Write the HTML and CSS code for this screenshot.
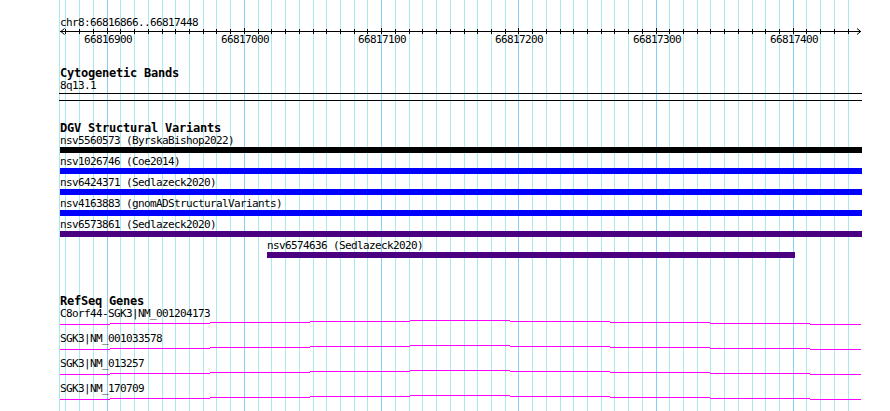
FILE: index.html
```html
<!DOCTYPE html>
<html lang="en">
<head>
<meta charset="utf-8">
<title>chr8:66816866..66817448</title>
<link rel="stylesheet" href="styles.css">
</head>
<body>
<div class="view">
  <svg class="grid" width="890" height="411" viewBox="0 0 890 411" aria-hidden="true">
    <path class="grid-minor" d="M59.5 0V411M65.5 0V411M79.5 0V411M93.5 0V411M120.5 0V411M134.5 0V411M148.5 0V411M162.5 0V411M175.5 0V411M189.5 0V411M203.5 0V411M216.5 0V411M230.5 0V411M258.5 0V411M271.5 0V411M285.5 0V411M299.5 0V411M313.5 0V411M326.5 0V411M340.5 0V411M354.5 0V411M367.5 0V411M395.5 0V411M409.5 0V411M422.5 0V411M436.5 0V411M450.5 0V411M464.5 0V411M477.5 0V411M491.5 0V411M505.5 0V411M532.5 0V411M546.5 0V411M560.5 0V411M573.5 0V411M587.5 0V411M601.5 0V411M614.5 0V411M628.5 0V411M642.5 0V411M669.5 0V411M683.5 0V411M697.5 0V411M710.5 0V411M724.5 0V411M738.5 0V411M752.5 0V411M765.5 0V411M779.5 0V411M806.5 0V411M820.5 0V411M834.5 0V411M848.5 0V411"/>
    <path class="grid-major" d="M107.5 0V411M244.5 0V411M381.5 0V411M518.5 0V411M656.5 0V411M793.5 0V411"/>
  </svg>

  <div class="tracks">
    <section class="ruler">
      <div class="locus">chr8:66816866..66817448</div>
      <svg class="axis" width="802" height="20" viewBox="0 0 802 20">
        <path class="axis-line" d="M0 4.5H801"/>
        <path class="axis-line" d="M5.5 2V7M19.5 2V7M33.5 2V7M60.5 2V7M74.5 2V7M88.5 2V7M102.5 2V7M115.5 2V7M129.5 2V7M143.5 2V7M156.5 2V7M170.5 2V7M198.5 2V7M211.5 2V7M225.5 2V7M239.5 2V7M253.5 2V7M266.5 2V7M280.5 2V7M294.5 2V7M307.5 2V7M335.5 2V7M349.5 2V7M362.5 2V7M376.5 2V7M390.5 2V7M404.5 2V7M417.5 2V7M431.5 2V7M445.5 2V7M472.5 2V7M486.5 2V7M500.5 2V7M513.5 2V7M527.5 2V7M541.5 2V7M554.5 2V7M568.5 2V7M582.5 2V7M609.5 2V7M623.5 2V7M637.5 2V7M650.5 2V7M664.5 2V7M678.5 2V7M692.5 2V7M705.5 2V7M719.5 2V7M746.5 2V7M760.5 2V7M774.5 2V7M788.5 2V7"/>
        <path class="axis-line" d="M47.5 1V7M184.5 1V7M321.5 1V7M458.5 1V7M596.5 1V7M733.5 1V7"/>
        <path class="axis-arrow" d="M4.5 1.5L0.8 4.5L4.5 7.5"/>
        <path class="axis-arrow" d="M797 1.5L800.7 4.5L797 7.5"/>
        <text x="48" y="16">66816900</text>
        <text x="185" y="16">66817000</text>
        <text x="322" y="16">66817100</text>
        <text x="459" y="16">66817200</text>
        <text x="597" y="16">66817300</text>
        <text x="734" y="16">66817400</text>
      </svg>
    </section>

    <section class="track cyto">
      <h2 class="track-title">Cytogenetic Bands</h2>
      <div class="label">8q13.1</div>
      <div class="band"></div>
    </section>

    <section class="track dgv">
      <h2 class="track-title">DGV Structural Variants</h2>
      <div class="sv">
        <div class="label">nsv5560573 (ByrskaBishop2022)</div>
        <div class="bar bar-black"></div>
      </div>
      <div class="sv">
        <div class="label">nsv1026746 (Coe2014)</div>
        <div class="bar bar-blue"></div>
      </div>
      <div class="sv">
        <div class="label">nsv6424371 (Sedlazeck2020)</div>
        <div class="bar bar-blue"></div>
      </div>
      <div class="sv">
        <div class="label">nsv4163883 (gnomADStructuralVariants)</div>
        <div class="bar bar-blue"></div>
      </div>
      <div class="sv">
        <div class="label">nsv6573861 (Sedlazeck2020)</div>
        <div class="bar bar-indigo"></div>
      </div>
      <div class="sv" style="margin-left:207px;width:528px">
        <div class="label">nsv6574636 (Sedlazeck2020)</div>
        <div class="bar bar-indigo"></div>
      </div>
    </section>

    <section class="track refseq">
      <h2 class="track-title">RefSeq Genes</h2>
      <div class="gene">
        <div class="label">C8orf44-SGK3|NM_001204173</div>
        <svg class="intron" width="802" height="13" viewBox="0 0 802 13"><path d="M0 4.5H50M50 3.5H150M150 2.5H250M250 1.5H350M350 0.5H450M450 1.5H550M550 2.5H650M650 3.5H750M750 4.5H801"/></svg>
      </div>
      <div class="gene">
        <div class="label">SGK3|NM_001033578</div>
        <svg class="intron" width="802" height="13" viewBox="0 0 802 13"><path d="M0 4.5H50M50 3.5H150M150 2.5H250M250 1.5H350M350 0.5H450M450 1.5H550M550 2.5H650M650 3.5H750M750 4.5H801"/></svg>
      </div>
      <div class="gene">
        <div class="label">SGK3|NM_013257</div>
        <svg class="intron" width="802" height="13" viewBox="0 0 802 13"><path d="M0 4.5H50M50 3.5H150M150 2.5H250M250 1.5H350M350 0.5H450M450 1.5H550M550 2.5H650M650 3.5H750M750 4.5H801"/></svg>
      </div>
      <div class="gene">
        <div class="label">SGK3|NM_170709</div>
        <svg class="intron" width="802" height="13" viewBox="0 0 802 13"><path d="M0 4.5H50M50 3.5H150M150 2.5H250M250 1.5H350M350 0.5H450M450 1.5H550M550 2.5H650M650 3.5H750M750 4.5H801"/></svg>
      </div>
    </section>
  </div>
</div>
</body>
</html>
```

FILE: styles.css
```css
* {
  box-sizing: border-box;
  margin: 0;
  padding: 0;
}

html,
body {
  background: #ffffff;
}

body {
  margin: 0;
  font-family: "DejaVu Sans Mono", "Liberation Mono", monospace;
  font-size: 11px;
  letter-spacing: -0.62px;
  color: #000000;
}

.view {
  position: relative;
  width: 890px;
  height: 411px;
  overflow: hidden;
}

.grid {
  position: absolute;
  left: 0;
  top: 0;
  z-index: 0;
  shape-rendering: crispEdges;
}

.grid-minor {
  stroke: #a8eaf0;
  stroke-width: 1;
  fill: none;
}

.grid-major {
  stroke: #87cefa;
  stroke-width: 1;
  fill: none;
}

.tracks {
  position: relative;
  z-index: 1;
  width: 862px;
  padding: 17px 0 0 60px;
}

.locus {
  height: 12px;
  line-height: 12px;
  white-space: nowrap;
}

.axis {
  display: block;
  margin-top: -2px;
  overflow: visible;
}

.axis-line {
  stroke: #000000;
  stroke-width: 1;
  fill: none;
  shape-rendering: crispEdges;
}

.axis-arrow {
  stroke: #000000;
  stroke-width: 1;
  fill: none;
}

.axis text {
  font-family: "DejaVu Sans Mono", "Liberation Mono", monospace;
  font-size: 11px;
  letter-spacing: -0.62px;
  fill: #000000;
  text-anchor: middle;
}

.track-title {
  height: 13px;
  font-size: 12px;
  font-weight: bold;
  line-height: 13px;
  letter-spacing: -0.22px;
  white-space: nowrap;
}

.label {
  height: 12px;
  line-height: 12px;
  white-space: nowrap;
}

.cyto {
  margin-top: 20px;
}

.band {
  margin-top: 1px;
  margin-left: -1px;
  height: 8px;
  border-top: 1px solid #000000;
  border-bottom: 1px solid #000000;
}

.dgv {
  margin-top: 21px;
}

.sv {
  padding-bottom: 3px;
}

.bar {
  height: 6px;
}

.bar-black {
  background: #000000;
}

.bar-blue {
  background: #0000ff;
}

.bar-indigo {
  background: #4b0082;
}

.refseq {
  margin-top: 34px;
}

.intron {
  display: block;
  shape-rendering: crispEdges;
}

.intron path {
  stroke: #ff00ff;
  stroke-width: 1;
  fill: none;
}
```
